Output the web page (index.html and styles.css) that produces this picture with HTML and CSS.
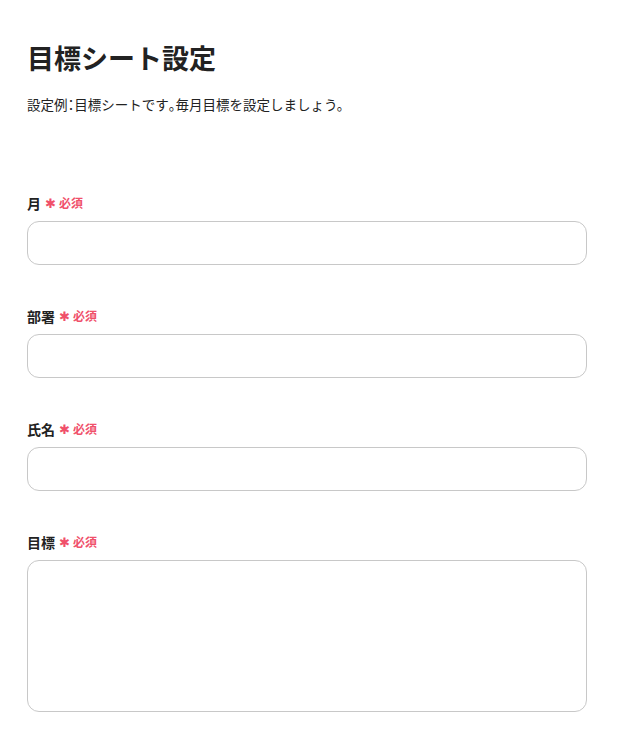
FILE: index.html
```html
<!DOCTYPE html>
<html lang="ja">
<head>
<meta charset="utf-8">
<link rel="stylesheet" href="styles.css">
</head>
<body>
<div class="page">
  <h1 class="title">目標シート設定</h1>
  <p class="desc">設定例<span class="half">：</span>目標シートです<span class="half">。</span>毎月目標を設定しましょう。</p>
  <form class="form">
    <div class="field">
      <label class="label">月<span class="req"><span class="star">✱</span>必須</span></label>
      <input class="input" type="text">
    </div>
    <div class="field">
      <label class="label">部署<span class="req"><span class="star">✱</span>必須</span></label>
      <input class="input" type="text">
    </div>
    <div class="field">
      <label class="label">氏名<span class="req"><span class="star">✱</span>必須</span></label>
      <input class="input" type="text">
    </div>
    <div class="field">
      <label class="label">目標<span class="req"><span class="star">✱</span>必須</span></label>
      <textarea class="input textarea"></textarea>
    </div>
  </form>
</div>
</body>
</html>
```
FILE: styles.css
```css
html, body {
  margin: 0;
  padding: 0;
  background: #fff;
}
body {
  font-family: "Noto Sans CJK JP", "Noto Sans", sans-serif;
  color: #222;
}
.page {
  padding: 40px 35px 0 27px;
  width: 560px;
}
.title {
  margin: 0;
  font-size: 27px;
  line-height: 36px;
  font-weight: 700;
}
.desc {
  margin: 18px 0 0;
  font-size: 13.5px;
  line-height: 20px;
}
.half {
  font-feature-settings: "halt";
}
.form {
  margin-top: 79px;
  display: flex;
  flex-direction: column;
  gap: 41px;
}
.field {
  display: flex;
  flex-direction: column;
  gap: 8px;
}
.label {
  font-size: 14px;
  line-height: 20px;
  font-weight: 700;
  display: flex;
  align-items: center;
}
.req {
  color: #f0506a;
  font-size: 12px;
  font-weight: 700;
  margin-left: 4px;
  display: inline-flex;
  align-items: center;
}
.star {
  font-size: 13px;
  margin-right: 3px;
  font-weight: 400;
}
.input {
  box-sizing: border-box;
  width: 560px;
  height: 44px;
  border: 1px solid #c8c8c8;
  border-radius: 12px;
  background: #fff;
  margin: 0;
  padding: 8px 12px;
  font: inherit;
  outline: none;
}
.textarea {
  height: 152px;
  resize: none;
}
```
